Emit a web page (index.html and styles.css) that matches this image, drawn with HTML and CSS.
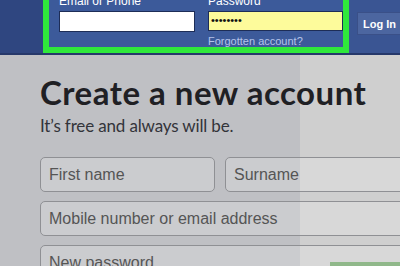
FILE: index.html
```html
<!DOCTYPE html>
<html>
<head>
<meta charset="utf-8">
<link rel="stylesheet" href="styles.css">
</head>
<body>
<header class="topbar">
  <div class="side-left"></div>
  <div class="login-box">
    <div class="field email">
      <label class="lbl">Email or Phone</label>
      <div class="top-input white"></div>
    </div>
    <div class="field pass">
      <label class="lbl">Password</label>
      <div class="top-input yellow"><span class="dots">••••••••</span></div>
      <a class="forgot">Forgotten account?</a>
    </div>
  </div>
  <div class="side-right">
    <button class="login-btn">Log In</button>
  </div>
</header>
<main class="content">
  <h1 class="title">Create a new account</h1>
  <p class="subtitle">It’s free and always will be.</p>
  <div class="row first">
    <div class="inp half">First name</div>
    <div class="inp half2">Surname</div>
  </div>
  <div class="row">
    <div class="inp full">Mobile number or email address</div>
  </div>
  <div class="row">
    <div class="inp full">New password</div>
  </div>
  <div class="green-peek"></div>
</main>
</body>
</html>
```
FILE: styles.css
```css
* { box-sizing: border-box; }
html, body { margin: 0; padding: 0; overflow: hidden; }
body {
  width: 400px;
  height: 266px;
  position: relative;
  background: linear-gradient(to right, #bfc0c4 0, #bfc0c4 300px, #cfcfcf 300px);
  font-family: "Liberation Sans", Arial, sans-serif;
}
.topbar {
  display: flex;
  height: 55px;
  background: #3a5593;
  border-bottom: 2px solid #26386a;
}
.side-left {
  width: 43px;
  flex-shrink: 0;
  background: #2f4680;
}
.login-box {
  width: 306px;
  flex-shrink: 0;
  height: 53px;
  border: 6px solid #2fe83b;
  border-top: none;
  background: #3c5a9a;
  display: flex;
  padding-left: 10px;
  gap: 13px;
}
.field { display: flex; flex-direction: column; }
.lbl {
  color: #fff;
  font-size: 12px;
  line-height: 12px;
  margin-top: -5px;
  height: 16px;
}
.top-input {
  height: 21px;
  border: 1px solid #1d2d57;
}
.white { width: 136px; background: #fff; }
.yellow { width: 135px; background: #fdfb9b; display: flex; align-items: center; padding-left: 2px; }
.dots { font-size: 11px; line-height: 11px; color: #111; }
.forgot {
  color: #b4c3ea;
  font-size: 11px;
  margin-top: 4px;
}
.side-right {
  flex: 1;
  padding: 12px 0 0 8px;
}
.login-btn {
  width: 43px;
  height: 23px;
  background: #4c66a0;
  border: 1px solid #3a5088;
  border-right: none;
  color: #fff;
  font-family: "Liberation Sans", Arial, sans-serif;
  font-weight: bold;
  font-size: 11px;
  text-align: left;
  padding: 0 0 0 5px;
  white-space: nowrap;
}
.content {
  padding: 17px 0 0 40px;
}
.title {
  margin: 0;
  font-family: Lato, "Open Sans", sans-serif;
  font-weight: bold;
  font-size: 33px;
  letter-spacing: 0.5px;
  line-height: 40px;
  color: #1f2024;
}
.subtitle {
  margin: 3px 0 0;
  font-family: Lato, "Open Sans", sans-serif;
  font-size: 17px;
  letter-spacing: -0.15px;
  line-height: 22px;
  color: #33343a;
}
.row {
  display: flex;
  gap: 10px;
  margin-top: 9px;
}
.row.first { margin-top: 20px; }
.inp {
  height: 35px;
  border: 1px solid #8f9094;
  border-radius: 5px;
  background: rgba(255,255,255,0.2);
  color: #555;
  font-size: 16px;
  line-height: 33px;
  padding-left: 8px;
  flex-shrink: 0;
}
.half { width: 175px; }
.half2 { width: 190px; }
.full { width: 375px; }
.green-peek {
  position: absolute;
  left: 330px;
  top: 262px;
  width: 80px;
  height: 10px;
  background: #90b88a;
}
```
